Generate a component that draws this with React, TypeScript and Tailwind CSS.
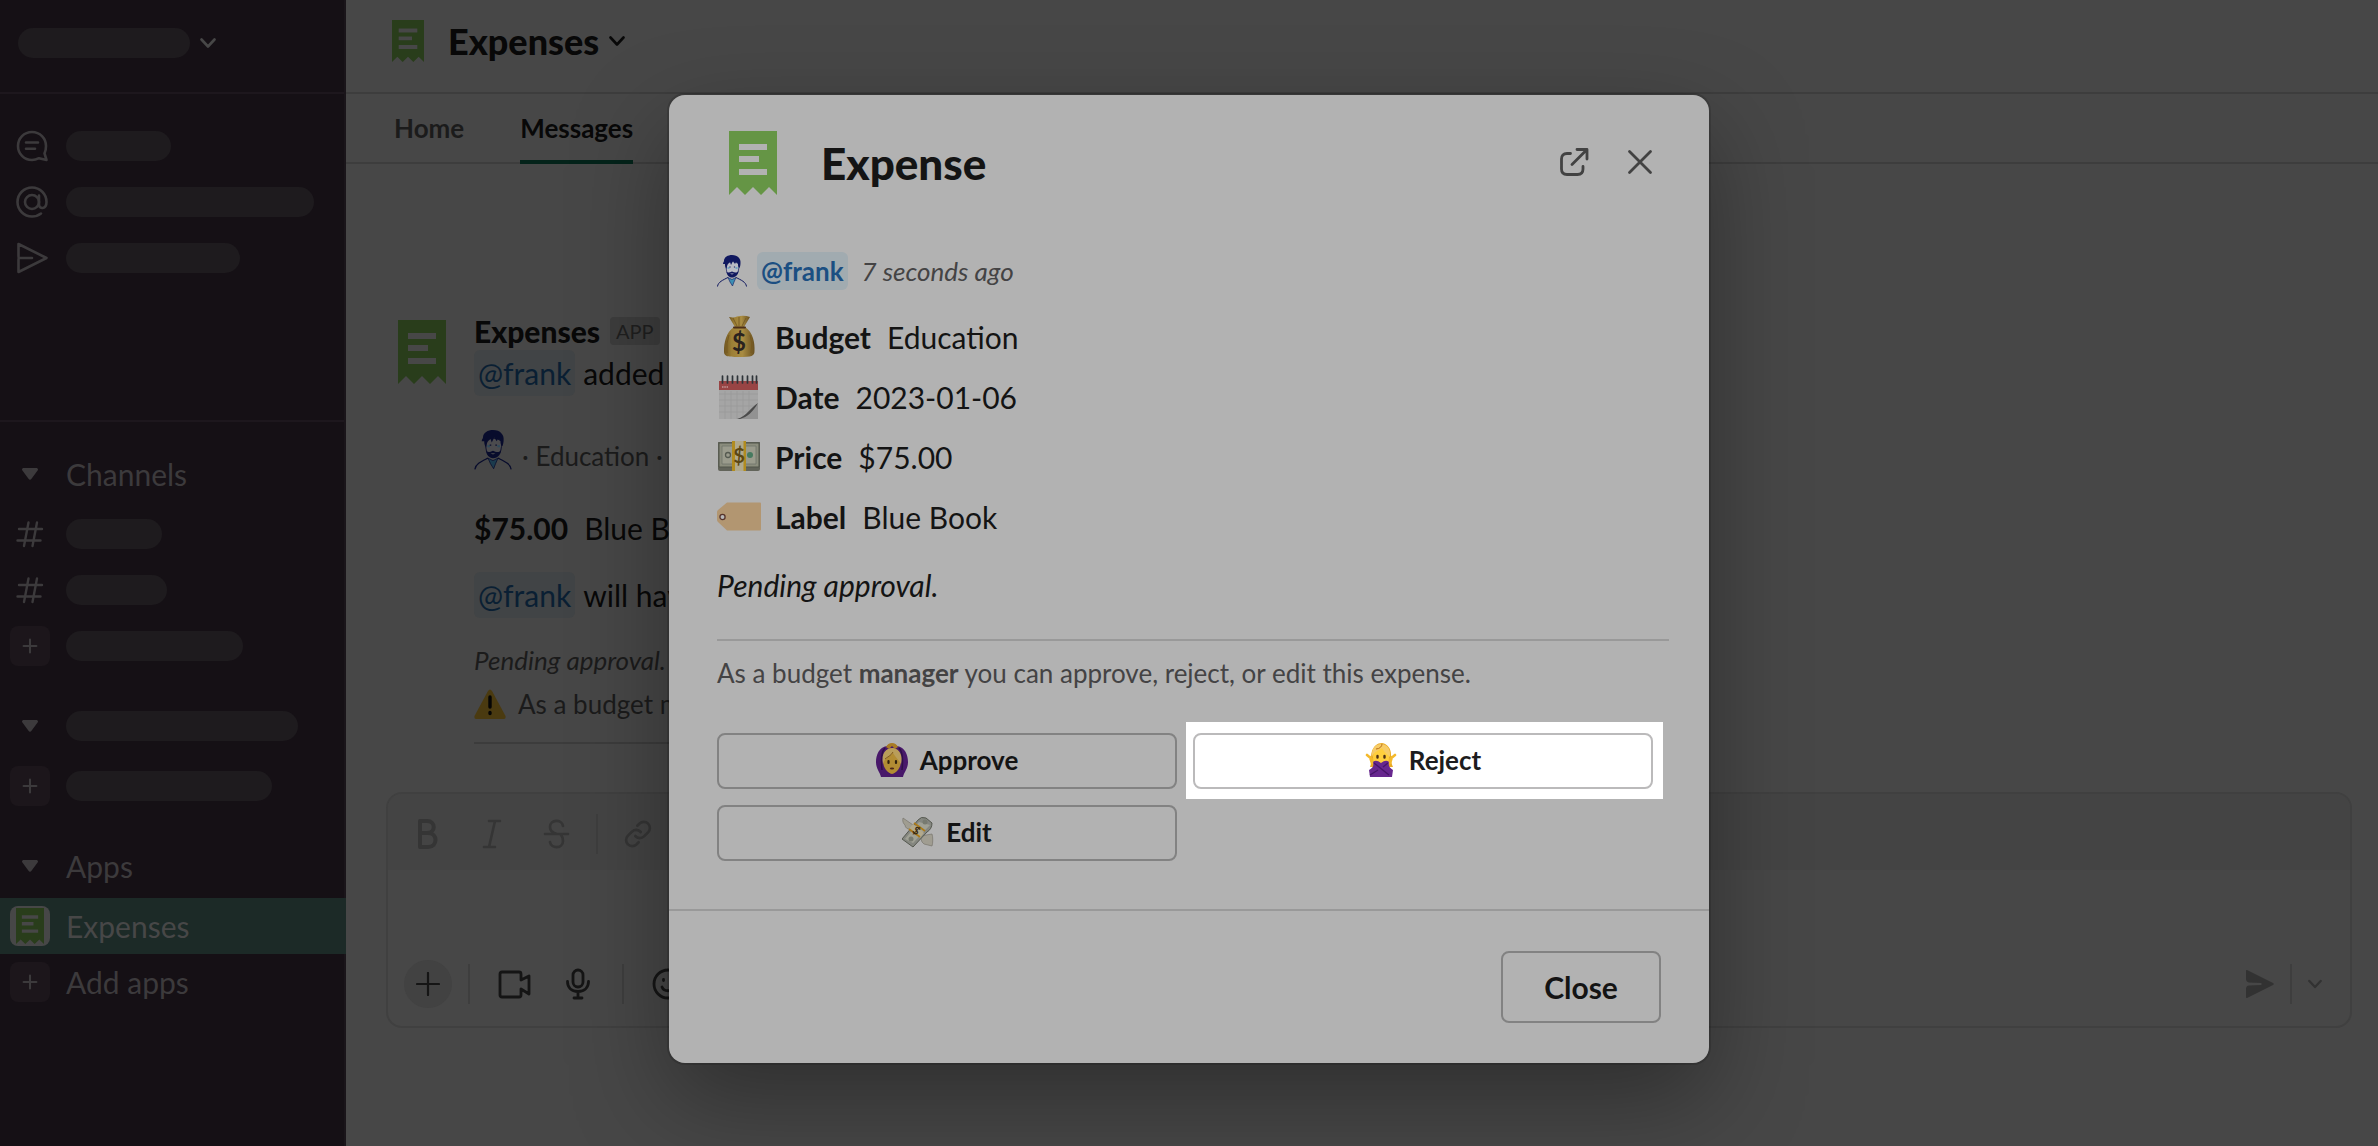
import React from "react";
import { clsx } from "clsx";

type IconProps = { className?: string };

function Receipt({ className }: IconProps) {
  return (
    <svg viewBox="0 0 48 64" preserveAspectRatio="none" className={className} aria-hidden="true">
      <path
        fillRule="evenodd"
        fill="currentColor"
        d="M0 0H48V64L40 56L32 64L24 56L16 64L8 56L0 64ZM10 13V19H38V13ZM10 25V31H30V25ZM10 38V44H38V38Z"
      />
    </svg>
  );
}

function Chevron({ className }: IconProps) {
  return (
    <svg viewBox="0 0 16 10" fill="none" stroke="currentColor" strokeWidth="2.6" strokeLinecap="round" strokeLinejoin="round" className={className} aria-hidden="true">
      <path d="M1.5 1.5L8 8.5L14.5 1.5" />
    </svg>
  );
}

function Plus({ className }: IconProps) {
  return (
    <svg viewBox="0 0 20 20" stroke="currentColor" strokeWidth="2.6" strokeLinecap="round" className={className} aria-hidden="true">
      <path d="M10 2V18M2 10H18" />
    </svg>
  );
}

function ThreadsIcon() {
  return (
    <svg viewBox="0 0 32 32" fill="none" stroke="currentColor" strokeWidth="2.6" strokeLinecap="round" strokeLinejoin="round" className="ml-1 size-8" aria-hidden="true">
      <path d="M30 16C30 8.300 24 2 16 2S2 8.300 2 16s6 14 14 14c2.600 0 5-.8 7-1.800L30.500 30l-2-6.600C29.800 21 30 18.500 30 16Z" />
      <path d="M10 12.500H22M10 18.800H19" />
    </svg>
  );
}

function AtIcon() {
  return (
    <svg viewBox="0 0 32 32" fill="none" stroke="currentColor" strokeWidth="2.6" strokeLinecap="round" strokeLinejoin="round" className="ml-1 size-8" aria-hidden="true">
      <circle cx="16" cy="16" r="7" />
      <path d="M23 9.500V18.500c0 5 7.500 5 7.500-2.500C30.500 8 24 1.500 16 1.500S1.500 8 1.500 16 8 30.500 16 30.500c3.500 0 6.500-1.100 9-3" />
    </svg>
  );
}

function SendOutlineIcon() {
  return (
    <svg viewBox="0 0 32 32" fill="none" stroke="currentColor" strokeWidth="2.6" strokeLinecap="round" strokeLinejoin="round" className="ml-1 size-8" aria-hidden="true">
      <path d="M2.500 2L30.500 16L2.500 30V17.500M2.500 2V14.500M2.500 16H16" />
    </svg>
  );
}

function HashIcon() {
  return (
    <svg viewBox="0 0 28 28" fill="none" stroke="currentColor" strokeWidth="2.4" strokeLinecap="round" className="size-7" aria-hidden="true">
      <path d="M12.500 2.500L8 26M21 2.500L16.500 26M3 9H26M1.500 20.500H24.500" />
    </svg>
  );
}

function TriangleIcon() {
  return (
    <svg viewBox="0 0 16 12" fill="currentColor" className="h-3 w-4" aria-hidden="true">
      <path d="M2 0H14C15.800 0 16.500 1.200 15.600 2.500L9.500 10.800C8.700 12 7.300 12 6.500 10.800L.4 2.500C-.5 1.200.2 0 2 0Z" />
    </svg>
  );
}

function Avatar({ className, dim }: IconProps & { dim?: boolean }) {
  const hair = dim ? "#080c2c" : "#10185f";
  return (
    <svg viewBox="0 0 30 32" className={className} aria-hidden="true">
      <path d="M9 9Q9 19 12 20Q15 22 19 20Q22 18 22 9Q15 4 9 9Z" fill={dim ? "#4b4b4e" : "#b9bbc4"} stroke={hair} strokeWidth=".7" />
      <path d="M6 9C6 7 7 7 7 6C7 2 11 0 15 0C21 0 24 4 23.500 8C23.500 10 23 12 22.500 13C21 12 21 10 21 8.500L19 7L18 9L16 6L14 10L13 7L11 9C10 10 10 12 9.500 14C8 12 8 10 8 9Z" fill={hair} />
      <path d="M9.500 16C10 18 12 18 15 16.500C18 18 20.500 18 21.500 15.500C21.500 20 18 22.500 15 22.500C12 22.500 9.500 20 9.500 16ZM13 18.500H17L15 19.500Z" fill={hair} fillRule="evenodd" />
      <path d="M10.500 13H12.500M18.500 13H20.500" stroke={dim ? "#2c4a5c" : "#5e9fc0"} strokeWidth="1.600" />
      <path d="M13 11.500V12.500M17.500 11.500V12.500" stroke={hair} strokeWidth="1.200" />
      <path d="M11 22.500L15 24.500L19 22.500L17 27L15.500 31L13 27Z" fill={dim ? "#1b3b4d" : "#3c8fb4"} stroke={hair} strokeWidth=".6" />
      <path d="M.5 31.500C1 27 6 25 11 22.500M29.500 31.500C29 27 24 25 19 22.500" fill="none" stroke={hair} strokeWidth="1" />
    </svg>
  );
}

function MoneyBag() {
  return (
    <svg viewBox="0 0 44 44" className="size-11" aria-hidden="true">
      <defs>
        <linearGradient id="bag" x1="0" x2="1">
          <stop offset="0" stopColor="#6e5420" />
          <stop offset=".25" stopColor="#9c7f36" />
          <stop offset=".6" stopColor="#a98c42" />
          <stop offset="1" stopColor="#695020" />
        </linearGradient>
      </defs>
      <path d="M12 2Q17 3 20 1.500Q27 0 33 2L27 12H18Z" fill="url(#bag)" />
      <path d="M16 3L20 11M22 2V11M29 3L25 11" stroke="#6e5420" strokeWidth=".8" />
      <path d="M17 12H28C36 17 38 28 37.500 36C37.500 41 35 42 22 42S7 41 7 36C7 28 9 17 17 12Z" fill="url(#bag)" />
      <path d="M12 20Q9 28 10 38M33 20Q36 28 34 38" fill="none" stroke="#77591f" strokeWidth="1" />
      <path d="M17 12.500H28" stroke="#4c2f18" strokeWidth="2" strokeLinecap="round" />
      <text x="22" y="36" textAnchor="middle" fontSize="24" fontWeight="700" fill="#2a221e">$</text>
    </svg>
  );
}

function Calendar() {
  return (
    <svg viewBox="0 0 44 44" className="size-11" aria-hidden="true">
      <path d="M2 10H41V44H2Z" fill="#a5a5a5" />
      <path d="M2 19H41M2 25H41M2 31H41M2 37H41M8 16V44M14 16V44M20 16V44M26 16V44M32 16V44" stroke="#989898" strokeWidth=".7" />
      <path d="M2 6H41V15H2Z" fill="#984444" />
      <path d="M21 44C31 41 34 34 41 29V44Z" fill="#929292" />
      <path d="M20 44C30 41 33 33 41 28C36 37 30 42 23 44Z" fill="#4b4b4b" />
      <path d="M5.500 1V8M10.500 1V8M15.500 1V8M20.500 1V8M25.500 1V8M30.500 1V8M35.500 1V8M39.500 1V8" stroke="#2f3439" strokeWidth="1.700" strokeLinecap="round" />
      <path d="M5 12H11" stroke="#b78282" strokeWidth="2" strokeDasharray="1.5 .8" />
    </svg>
  );
}

function Bill() {
  return (
    <svg viewBox="0 0 44 44" className="size-11" aria-hidden="true">
      <path d="M1 7H43V34Q43 36 41 36H3Q1 36 1 34Z" fill="#62645a" />
      <path d="M2 8H42V32H2Z" fill="#8b8d7d" stroke="#50544a" strokeWidth="1" />
      <path d="M5 11H39V29H5Z" fill="#9a9b8c" stroke="#70756a" strokeWidth=".8" />
      <circle cx="11" cy="20" r="2.500" fill="none" stroke="#555a50" strokeWidth="1.300" />
      <circle cx="33" cy="20" r="3" fill="#467a5f" />
      <path d="M15 6H29V36H15Z" fill="#b0a98c" />
      <path d="M15 6H18V36H15ZM26.500 6H29V36H26.500Z" fill="#b18c1f" />
      <text x="22" y="27.500" textAnchor="middle" fontSize="20" fontWeight="700" fill="#5b4714">$</text>
    </svg>
  );
}

function Tag() {
  return (
    <svg viewBox="0 0 44 44" className="size-11" aria-hidden="true">
      <path d="M10 7.500H43Q44 7.500 44 8.500V34Q44 35.500 43 35.500H10L1 27Q0 26 0 25V17Q0 16 1 15Z" fill="#b29671" />
      <circle cx="5.500" cy="22" r="2.600" fill="#b7b7b7" stroke="#56342c" strokeWidth="1.300" />
    </svg>
  );
}

function ApproveEmoji() {
  return (
    <svg viewBox="0 0 32 34" className="h-[34px] w-8" aria-hidden="true">
      <path d="M11 3C3 4 0 12 0 19C0 26 4 29 5 34H27C28 29 32 26 32 19C32 12 29 4 21 3L18 1H14Z" fill="#48186a" />
      <path d="M9 5C5 9 5 18 6 27M23 5C27 9 27 18 26 27" fill="none" stroke="#2e0e47" strokeWidth="1.500" />
      <path d="M10 4Q12 0 16 0T22 4L19 6L16 3L13 6Z" fill="#a87b24" />
      <path d="M7 18C7 9 10 6 16 5C22 6 25 9 25 18C25 24 21 30 16 31C11 30 7 24 7 18Z" fill="#b28c33" />
      <path d="M7 21C5 10 10 5 17 5C24 6 27 13 25 21C23 17 19 14 17 10C14 14 9 14 7 21Z" fill="#b99d5a" />
      <path d="M17 9C15 13 11 14 9 16" fill="none" stroke="#80591e" strokeWidth="1" />
      <path d="M12.500 18V20M20 18V20" stroke="#30210d" strokeWidth="2.200" strokeLinecap="round" />
      <ellipse cx="16" cy="25.500" rx="2.200" ry="1" fill="#4d2617" />
      <path d="M5 29H11L16 32L21 29H27L26 34H6Z" fill="#48186a" />
    </svg>
  );
}

function RejectEmoji() {
  return (
    <svg viewBox="0 0 32 34" className="h-[34px] w-8" aria-hidden="true">
      <path d="M5 24C7 20 5 14 7 8C9 3 12 0 17 0C23 1 26 6 26 12C26 17 26 20 28 24Z" fill="#e9aa24" />
      <path d="M2 12L8 17V20M5 14L7 20M30 12L24 17V20M27 14L25 20" fill="none" stroke="#f4b92c" strokeWidth="2.600" strokeLinecap="round" />
      <path d="M8 14C8 8 11 5 16 4C22 5 24 9 24 14C24 20 20 24 16 24C12 24 8 20 8 14Z" fill="#ffcf3d" />
      <path d="M7 14C6 5 11 1 16 1C22 1 26 6 25 14C22 11 19 9 17 5C14 8 9 8 7 14Z" fill="#f7cc67" />
      <path d="M11 6C15 6 17 3 17 1" fill="none" stroke="#b76f19" strokeWidth="1" />
      <path d="M12.500 13V14.500M19.500 13V14.500" stroke="#4b2d14" strokeWidth="2.400" strokeLinecap="round" />
      <path d="M5 34L4 27C8 25 9 23 8 19Q11 16 16 20Q21 16 24 19C23 23 25 25 28 27L27 34Z" fill="#67278e" />
      <path d="M9 20L24 32M23 20L18 24M13 27L5 32" fill="none" stroke="#461568" strokeWidth="1.400" />
    </svg>
  );
}

function WingedMoney() {
  return (
    <svg viewBox="0 0 32 32" className="size-8" aria-hidden="true">
      <path d="M14 11L1 2C0 6 2 8 3 9C3 12 6 13 7 13C9 15 12 14 14 11Z" fill="#a09d91" stroke="#79766d" strokeWidth=".7" />
      <path d="M18 20L30 18C31 21 31 27 30 30L26 29L22 28L20 26Z" fill="#a09d91" stroke="#79766d" strokeWidth=".7" />
      <path d="M0 23L16 4Q19 0 24 2L30 7Q30 13 25 16L11 31Z" fill="#858780" stroke="#55584f" strokeWidth="1" />
      <path d="M3 23L17 6L28 9L11 27Z" fill="#a0a195" />
      <circle cx="23" cy="6" r="2.500" fill="#777a70" />
      <circle cx="9" cy="23" r="2.500" fill="#777a70" />
      <path d="M11 8L22 17L18 22L7 13Z" fill="#b2a98c" />
      <path d="M12 7L23 15M7 13L18 21" stroke="#ac7a19" strokeWidth="1.800" />
      <text x="14.500" y="18.500" textAnchor="middle" fontSize="11" fontWeight="700" fill="#3b2b11" transform="rotate(38 14.500 14.500)">$</text>
    </svg>
  );
}

function Warning() {
  return (
    <svg viewBox="0 0 32 30" className="h-[30px] w-8" aria-hidden="true">
      <path d="M14 2Q16-1 18 2L31.500 27Q32 30 30 30H2Q0 30 .5 27Z" fill="#4a3a10" />
      <path d="M16 8V18M16 23.500V24.500" stroke="#050505" strokeWidth="3.400" strokeLinecap="round" />
    </svg>
  );
}

function Pill({ className }: IconProps) {
  return <span className={clsx("h-[30px] rounded-full bg-[#1e1b1e]", className)} />;
}

function PlusBox() {
  return (
    <span className="flex size-10 items-center justify-center rounded-lg bg-[#1c161b]">
      <Plus className="size-4" />
    </span>
  );
}

interface SidebarRowProps {
  icon: React.ReactNode;
  pill?: string;
  label?: string;
  active?: boolean;
}

function SidebarRow({ icon, pill, label, active }: SidebarRowProps) {
  return (
    <li>
      <a href="#" className={clsx("flex h-14 items-center", active ? "-mr-0.5 bg-[#1c2a27] text-[#474747]" : "text-[#3c3a3c]")}>
        <span className="flex w-[66px] shrink-0">
          <span className="flex w-[60px] justify-center">{icon}</span>
        </span>
        {label ? <span className="text-[30px]">{label}</span> : <Pill className={pill} />}
      </a>
    </li>
  );
}

function SectionHeader({ pill, label }: { pill?: string; label?: string }) {
  return (
    <button type="button" className="mb-1 flex h-14 w-full items-center text-[#3c3a3c]">
      <span className="flex w-[66px] shrink-0">
        <span className="flex w-[60px] justify-center">
          <TriangleIcon />
        </span>
      </span>
      {label ? <span className="text-[30px]">{label}</span> : <Pill className={pill} />}
    </button>
  );
}

function Sidebar() {
  return (
    <nav className="flex w-[346px] shrink-0 flex-col border-r-2 border-[#1a151a] bg-[#151015]">
      <div className="flex h-[94px] items-center gap-2.5 border-b-2 border-[#1d171d] pb-1.5 pl-[18px] text-[#474747]">
        <Pill className="w-[172px]" />
        <Chevron className="h-2.5 w-4" />
      </div>
      <ul className="h-[328px] border-b-2 border-[#1d171d] pt-6">
        <SidebarRow icon={<ThreadsIcon />} pill="w-[105px]" />
        <SidebarRow icon={<AtIcon />} pill="w-[248px]" />
        <SidebarRow icon={<SendOutlineIcon />} pill="w-[174px]" />
      </ul>
      <div className="flex flex-col gap-6 pt-6">
        <section>
          <SectionHeader label="Channels" />
          <ul>
            <SidebarRow icon={<HashIcon />} pill="w-24" />
            <SidebarRow icon={<HashIcon />} pill="w-[101px]" />
            <SidebarRow icon={<PlusBox />} pill="w-[177px]" />
          </ul>
        </section>
        <section>
          <SectionHeader pill="w-[232px]" />
          <ul>
            <SidebarRow icon={<PlusBox />} pill="w-[206px]" />
          </ul>
        </section>
        <section>
          <SectionHeader label="Apps" />
          <ul>
            <SidebarRow
              active
              label="Expenses"
              icon={
                <span className="flex size-10 items-center justify-center rounded-lg bg-[#474747]">
                  <Receipt className="h-9 w-7 text-[#293d1b]" />
                </span>
              }
            />
            <SidebarRow icon={<PlusBox />} label="Add apps" />
          </ul>
        </section>
      </div>
    </nav>
  );
}

function Mention({ className }: IconProps) {
  return (
    <a href="#" className={clsx("rounded-md px-1", className)}>
      @frank
    </a>
  );
}

function MessageRow() {
  return (
    <article className="flex max-w-[1300px] gap-4 pl-10 text-[30px] text-[#080808]">
      <div className="flex size-[72px] shrink-0 items-center justify-center rounded-lg">
        <Receipt className="h-16 w-12 text-[#293d1b]" />
      </div>
      <div className="min-w-0 flex-1 border-b-2 border-[#3c3c3c] whitespace-nowrap">
        <div className="flex h-[30px] items-center gap-2.5">
          <h2 className="font-['Lato_Black','Lato',sans-serif] font-black">Expenses</h2>
          <span className="rounded-sm bg-[#3d3d3d] px-1.5 text-xl leading-7 text-[#1f1f1f]">APP</span>
        </div>
        <p className="mt-1 flex h-[46px] items-center gap-2">
          <Mention className="bg-[#414446] leading-[46px] text-[#0a1f33]" /> added
        </p>
        <p className="mt-8 flex h-11 items-center gap-2.5 text-[26px] text-[#1b1b1b]">
          <Avatar dim className="h-10 w-[38px]" />
          <span className="pt-3">· Education ·</span>
        </p>
        <p className="mt-8 flex h-12 items-center gap-4">
          <strong>$75.00</strong> Blue Book
        </p>
        <p className="mt-5 flex h-[46px] items-center gap-2">
          <Mention className="bg-[#414446] leading-[46px] text-[#0a1f33]" /> will have
        </p>
        <p className="mt-5 flex h-11 items-center text-[26px] text-[#1b1b1b] italic">Pending approval.</p>
        <p className="mb-4 flex h-11 items-center gap-3 text-[26px] text-[#1b1b1b]">
          <Warning />
          As a budget manager
        </p>
      </div>
    </article>
  );
}

function Separator() {
  return <span className="h-10 w-0.5 bg-[#3e3e3e]" />;
}

function Composer() {
  return (
    <form className="mr-[26px] ml-10 flex h-[236px] flex-col overflow-hidden rounded-2xl border-2 border-[#404040]">
      <div className="flex h-[76px] items-center bg-[#444444] pt-1 pl-[26px] text-[#353535]">
        <button type="button" aria-label="Bold" className="w-16">
          <svg viewBox="0 0 28 32" fill="none" stroke="currentColor" strokeWidth="4" strokeLinejoin="round" className="h-8 w-7">
            <path d="M6 3H13C22 3 22 15 13 15H6ZM6 15H14C24 15 24 29 14 29H6Z" />
          </svg>
        </button>
        <button type="button" aria-label="Italic" className="w-16">
          <svg viewBox="0 0 28 32" fill="none" stroke="currentColor" strokeWidth="2.600" strokeLinecap="round" className="h-8 w-7">
            <path d="M11 3H22M6 29H17M17 3L11 29" />
          </svg>
        </button>
        <button type="button" aria-label="Strikethrough" className="w-[54px]">
          <svg viewBox="0 0 28 32" fill="none" stroke="currentColor" strokeWidth="2.600" strokeLinecap="round" className="h-8 w-7">
            <path d="M3 16H26M21 8C20 1 8 1 8 9C8 13 11 15 15 16M8 24C9 31 21 31 21 23Q21 19 19 17" />
          </svg>
        </button>
        <Separator />
        <button type="button" aria-label="Link" className="pl-6">
          <svg viewBox="0 0 24 24" fill="none" stroke="currentColor" strokeWidth="2" strokeLinecap="round" className="size-8">
            <path d="M10 13.500a4.500 4.500 0 0 0 6.500.3l3.200-3.200a4.600 4.600 0 0 0-6.500-6.500L11.500 5.800M14 10.500a4.500 4.500 0 0 0-6.500-.3l-3.200 3.200a4.600 4.600 0 0 0 6.500 6.500l1.700-1.700" />
          </svg>
        </button>
      </div>
      <textarea aria-label="Message" className="min-h-0 flex-1 resize-none bg-transparent outline-none" />
      <div className="flex h-20 items-center pr-7 pb-1 pl-4 text-[#151515]">
        <button type="button" aria-label="Attach" className="flex size-12 items-center justify-center rounded-full bg-[#424242]">
          <svg viewBox="0 0 24 24" stroke="currentColor" strokeWidth="2.200" strokeLinecap="round" className="size-6">
            <path d="M12 1V23M1 12H23" />
          </svg>
        </button>
        <span className="ml-4 flex"><Separator /></span>
        <button type="button" aria-label="Video clip" className="ml-7">
          <svg viewBox="0 0 34 32" fill="none" stroke="currentColor" strokeWidth="2.800" strokeLinejoin="round" className="h-8 w-[34px]">
            <path d="M4 4H21Q23 4 23 6V12L31 8V26L23 21V27Q23 29 21 29H4Q2 29 2 27V6Q2 4 4 4Z" />
          </svg>
        </button>
        <button type="button" aria-label="Audio clip" className="ml-8">
          <svg viewBox="0 0 28 32" fill="none" stroke="currentColor" strokeWidth="2.800" strokeLinecap="round" className="h-8 w-7">
            <rect x="9" y="2" width="10" height="17" rx="5" />
            <path d="M3.500 13.500C3.500 19 7 23.500 14 23.500S24.500 19 24.500 13.500M14 23.500V30M10 30H18" />
          </svg>
        </button>
        <span className="ml-[30px] flex"><Separator /></span>
        <button type="button" aria-label="Emoji" className="ml-7">
          <svg viewBox="0 0 32 32" fill="none" stroke="currentColor" strokeWidth="2.800" strokeLinecap="round" className="size-8">
            <circle cx="16" cy="16" r="14" />
            <path d="M10 19C12 24 20 24 22 19M11.500 11.500V12.500M20.500 11.500V12.500" />
          </svg>
        </button>
        <button type="submit" aria-label="Send" className="ml-auto text-[#323232]">
          <svg viewBox="0 0 28 28" fill="currentColor" className="size-7">
            <path d="M0 1Q0-.5 1.500.2L27 13Q28.500 14 27 15L1.500 27.800Q0 28.500 0 27V19Q0 16 3 15.600L15 15Q16.500 14 15 13L3 12.400Q0 12 0 9Z" />
          </svg>
        </button>
        <span className="ml-4 flex"><Separator /></span>
        <button type="button" aria-label="Schedule" className="ml-4 text-[#323232]">
          <Chevron className="h-2.5 w-3.5" />
        </button>
      </div>
    </form>
  );
}

function Main() {
  return (
    <main className="flex min-w-0 flex-1 flex-col bg-[#474747]">
      <header className="flex h-[94px] items-center border-b-2 border-[#3d3d3d] pb-2.5 pl-[46px] text-[#080808]">
        <Receipt className="h-[42px] w-8 text-[#293d1b]" />
        <h1 className="ml-6 font-['Lato_Black','Lato',sans-serif] text-4xl font-black">Expenses</h1>
        <button type="button" aria-label="App details" className="ml-2.5">
          <Chevron className="h-2.5 w-4" />
        </button>
      </header>
      <div className="flex h-[70px] gap-14 border-b-2 border-[#3d3d3d] pl-12 text-[26px] font-bold">
        <a href="#" className="pt-[15px] text-[#1b1b1b]">Home</a>
        <a href="#" className="-mb-0.5 border-b-4 border-[#04231a] pt-[15px] text-[#080808]">Messages</a>
      </div>
      <div className="pt-[152px]">
        <MessageRow />
      </div>
      <div className="mt-12">
        <Composer />
      </div>
    </main>
  );
}

const fields = [
  { icon: <MoneyBag />, label: "Budget", value: "Education" },
  { icon: <Calendar />, label: "Date", value: "2023-01-06" },
  { icon: <Bill />, label: "Price", value: "$75.00" },
  { icon: <Tag />, label: "Label", value: "Blue Book" },
];

interface ActionButtonProps {
  icon: React.ReactNode;
  label: string;
  light?: boolean;
}

function ActionButton({ icon, label, light }: ActionButtonProps) {
  return (
    <button
      type="button"
      className={clsx(
        "flex h-14 w-full items-center justify-center gap-3 rounded-lg border-2 pb-0.5 text-[26px] font-bold",
        light ? "border-[#bbbabb] text-[#1d1c1d]" : "border-[#828282] text-[#141414]"
      )}
    >
      {icon}
      {label}
    </button>
  );
}

function ExpenseDialog() {
  return (
    <div
      role="dialog"
      aria-labelledby="expense-title"
      className="w-full max-w-[1040px] rounded-2xl bg-[#b2b2b2] text-[#141414] shadow-[0_0_0_2px_rgba(0,0,0,0.13),0_36px_96px_rgba(0,0,0,0.35)]"
    >
      <header className="flex h-[136px] items-center pr-[54px] pl-[60px]">
        <Receipt className="h-16 w-12 text-[#659545]" />
        <h2 id="expense-title" className="ml-11 font-['Lato_Black','Lato',sans-serif] text-[44px] font-black">Expense</h2>
        <div className="ml-auto flex items-center gap-9 pb-0.5 text-[#424242]">
          <button type="button" aria-label="Open in new window">
            <svg viewBox="0 0 30 30" fill="none" stroke="currentColor" strokeWidth="2.800" strokeLinecap="round" strokeLinejoin="round" className="size-[30px]">
              <path d="M11.500 6.500H8Q2.500 6.500 2.500 12V22Q2.500 27.500 8 27.500H18.500Q24 27.500 24 22V19.500M13 17.500L28 2.500M18 2.500H28V12" />
            </svg>
          </button>
          <button type="button" aria-label="Close dialog">
            <svg viewBox="0 0 30 30" stroke="currentColor" strokeWidth="2.800" strokeLinecap="round" className="size-[30px]">
              <path d="M4.500 4.500L25.500 25.500M25.500 4.500L4.500 25.500" />
            </svg>
          </button>
        </div>
      </header>

      <div className="pt-[22px] pr-10 pb-12 pl-12">
        <p className="flex h-9 items-center text-[26px]">
          <Avatar className="h-8 w-[30px]" />
          <Mention className="ml-2.5 bg-[#a1abb0] leading-[38px] font-bold text-[#1b4f82]" />
          <em className="ml-3.5 text-[#444344]">7 seconds ago</em>
        </p>

        <dl className="mt-[18px] text-[30px]">
          {fields.map((field) => (
            <div key={field.label} className="flex h-[60px] items-center">
              {field.icon}
              <dt className="ml-3.5 font-bold">{field.label}</dt>
              <dd className="ml-4">{field.value}</dd>
            </div>
          ))}
        </dl>

        <p className="mt-4 flex h-11 items-center text-[30px] italic">Pending approval.</p>
        <hr className="mt-8 border-t-2 border-[#999999]" />
        <p className="mt-2.5 flex h-11 items-center text-[26px] text-[#444344]">
          <span>
            As a budget <strong>manager</strong> you can approve, reject, or edit this expense.
          </span>
        </p>

        <div className="mt-[38px] grid grid-cols-2 gap-4 pr-4">
          <ActionButton icon={<ApproveEmoji />} label="Approve" />
          {/* highlighted step of the walkthrough */}
          <div className="-mt-[11px] -mr-2.5 -mb-2.5 -ml-[7px] bg-white pt-[11px] pr-2.5 pb-2.5 pl-[7px]">
            <ActionButton light icon={<RejectEmoji />} label="Reject" />
          </div>
          <ActionButton icon={<WingedMoney />} label="Edit" />
        </div>
      </div>

      <footer className="flex justify-end border-t-2 border-[#999999] pt-10 pr-12 pb-10">
        <button type="button" className="h-[72px] w-40 rounded-lg border-2 border-[#828282] text-[30px] font-bold">
          Close
        </button>
      </footer>
    </div>
  );
}

export default function App() {
  return (
    <div className="relative flex min-h-screen overflow-hidden font-['Lato','Noto_Sans',sans-serif]">
      <Sidebar />
      <Main />
      <div className="absolute inset-0 flex items-center justify-center pt-3">
        <ExpenseDialog />
      </div>
    </div>
  );
}
